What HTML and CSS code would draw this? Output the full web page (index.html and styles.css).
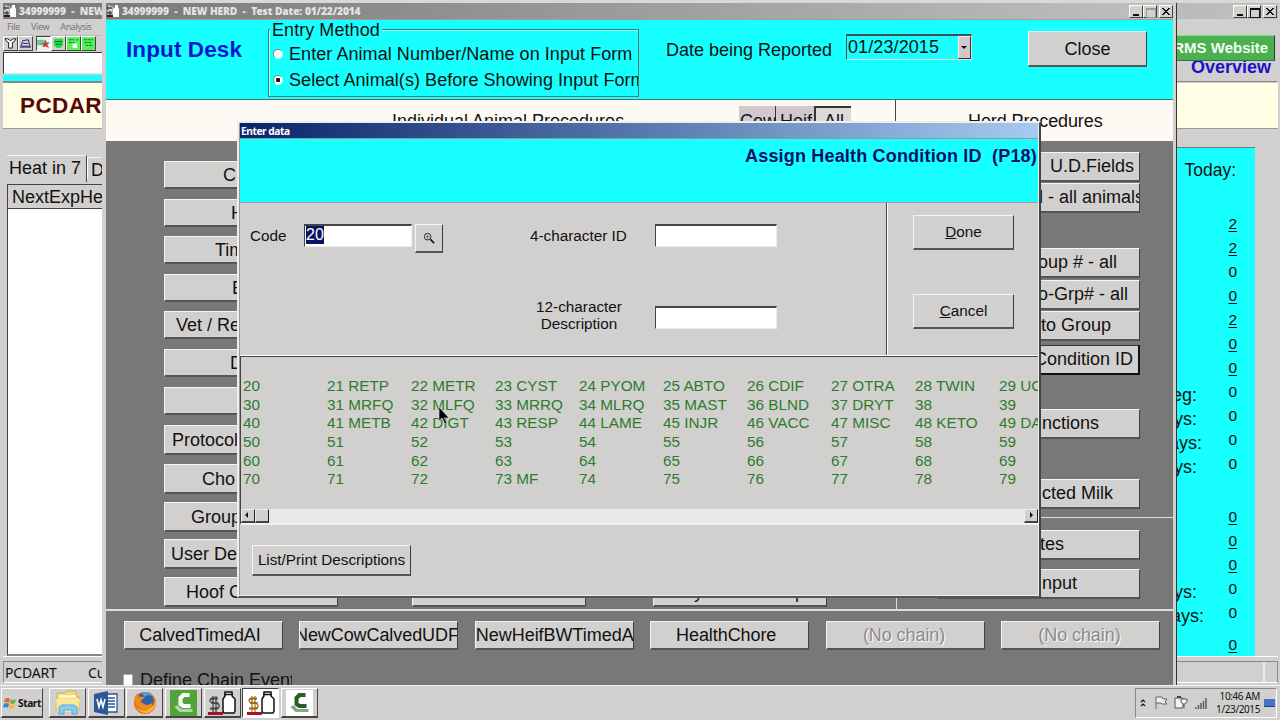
FILE: index.html
```html
<!DOCTYPE html>
<html lang="en">
<head>
<meta charset="utf-8">
<title>PCDART</title>
<link rel="stylesheet" href="styles.css">
</head>
<body>
<svg class="defs" width="0" height="0">
  <symbol id="herd" viewBox="0 0 12 12"><path d="M1 1h2v4h2V1M1 10V5h4v5" fill="none" stroke="#eee" stroke-width="1"/><path d="M0 3h5M0 8h5" stroke="#222"/><path d="M0 10h6v2H0z" fill="#411"/><path d="M8 0h3v2l1 2v8H6V4l2-2z" fill="#fff"/></symbol>
  <symbol id="milk" viewBox="0 0 28 24"><path d="M17 1h7v4l3 3v12l-1 2H16l-1-2V8l2-3z" fill="#fff" stroke="#111" stroke-width="1.5"/><path d="M16 3.500h9" stroke="#111" stroke-width="1.500"/><path d="M10 7H4L2 9v1l2 2h5l2 2v2l-2 2H2M5 5v16M8 5v16" fill="none" stroke="currentColor" stroke-width="1.5"/><path d="M2 8h8M3 12h8M2 17h9" stroke="#222" stroke-width=".7"/><path d="M0 21h15v3H0z" fill="#a41424"/></symbol>
  <symbol id="cam" viewBox="0 0 26 26"><path d="M19 3h-7L8 7v8l4 3h8v-4h-6l-2-1V9l2-2h5z" fill="currentColor"/><path d="M4 17l5 5h13v-3H11l-4-4z" fill="currentColor" opacity=".55"/></symbol>
</svg>

<main class="desktop">
  <section class="win main">
    <header class="title dim"><svg><use href="#herd"/></svg><b>34999999 &nbsp;- &nbsp;NEW HERD</b>
      <span class="ctl"><i class="min"></i><i class="max"></i><i class="x"></i></span></header>
    <nav class="menu"><span>File</span><span>View</span><span>Analysis</span></nav>
    <div class="tools">
      <span><svg viewBox="0 0 14 13"><path d="M1 2h3l3 2 3-2h3l-2 3-2 1v6H5V6L3 5z" fill="#fff" stroke="#111"/></svg></span>
      <span><svg viewBox="0 0 14 13"><path d="M2 10l2-6 6-1 2 7zM4 7h6M1 11h12" fill="none" stroke="#226"/></svg></span>
      <span class="on"><svg viewBox="0 0 14 13"><path d="M0 3h8l3 3-3 3H0z" fill="#6c9"/><path d="M9 3l1 3h4l-3 2 2 4-4-2-3 1 1-3-4-1h5z" fill="#c33"/></svg></span>
      <span><svg viewBox="0 0 14 13"><path d="M2 2h10v7l-3 3H5L2 9z" fill="#2d4"/><path d="M3 5h8M4 8h6" stroke="#063"/></svg></span>
      <span class="lime"><svg viewBox="0 0 14 13"><path d="M2 3h3M6 3h2M10 3h2M2 6h3M6 6h2" stroke="#063"/><path d="M6 7h5v5H6z" fill="#efe"/></svg></span>
      <span class="lime"><svg viewBox="0 0 14 13"><path d="M2 3h10M3 6h8M4 9h7" stroke="#063" stroke-dasharray="3 1"/></svg></span>
    </div>
    <div class="address"></div>
    <button class="website">DRMS Website</button>
    <div class="overview"></div>
    <div class="banner">PCDART</div>
    <div class="body">
      <div class="left">
        <div class="tabs"><span>Heat in 7</span><span>D</span></div>
        <div class="list"><div class="head">NextExpHeat</div></div>
      </div>
      <aside class="today">
        <span class="cap">Today:</span>
        <u class="first">2</u><u>2</u><b>0</b><u>0</u><u>2</u><u>0</u><u>0</u>
        <b><i>Preg:</i>0</b><b><i>Days:</i>0</b><b><i class="far">Days:</i>0</b><b><i>Days:</i>0</b>
        <u class="gap">0</u><u>0</u><u>0</u><b><i>Days:</i>0</b><b><i class="far2">Days:</i>0</b><u class="total">0</u>
      </aside>
    </div>
    <footer class="status"><span>PCDART</span><span>Cu</span><em></em></footer>
  </section>
  <span class="overlabel">Overview</span>

  <section class="win desk">
    <header class="title dim"><svg><use href="#herd"/></svg><b>34999999 &nbsp;- &nbsp;NEW HERD &nbsp;- &nbsp;Test Date: 01/22/2014</b>
      <span class="ctl"><i class="min"></i><i class="max off"></i><i class="x"></i></span></header>
    <div class="top">
      <h1>Input Desk</h1>
      <div class="method"><span class="legend">Entry Method</span>
        <label><i class="radio"></i>Enter Animal Number/Name on Input Form</label>
        <label><i class="radio sel"></i>Select Animal(s) Before Showing Input Form</label></div>
      <span class="date">Date being Reported</span>
      <div class="combo">01/23/2015<i></i></div>
      <button class="btn close">Close</button>
    </div>
    <div class="procs">
      <span class="ind">Individual Animal Procedures</span>
      <span class="t1">Cow</span><span class="t2">Heif</span><span class="t3">All</span>
      <span class="herd">Herd Procedures</span>
    </div>
    <div class="area">
      <div class="col a">
        <button class="btn" style="padding-left:58px">C</button><button class="btn" style="padding-left:66px">H</button>
        <button class="btn" style="padding-left:50px">Tim</button><button class="btn" style="padding-left:67px">B</button>
        <button class="btn" style="padding-left:11px">Vet / Re</button><button class="btn" style="padding-left:65px">D</button>
        <button class="btn"></button><button class="btn" style="padding-left:7px">Protocol</button>
        <button class="btn" style="padding-left:37px">Cho</button><button class="btn" style="padding-left:26px">Group</button>
        <button class="btn" style="padding-left:6px">User De</button><button class="btn" style="padding-left:21px">Hoof C</button>
      </div>
      <div class="col mid"><button class="btn"></button></div>
      <div class="col mid m2"><button class="btn"><span>y</span><span>p</span></button></div>
      <div class="col b">
        <button class="btn" style="padding-right:5px">U.D.Fields</button><button class="btn long">l - all animals</button>
        <button class="btn" style="padding-right:22px">Group # - all</button><button class="btn" style="padding-right:11px">o-Grp# - all</button>
        <button class="btn" style="padding-right:28px">to Group</button><button class="btn focus" style="padding-right:5px">Condition ID</button>
        <button class="btn" style="padding-right:40px">Functions</button><button class="btn" style="padding-right:26px">cted Milk</button>
        <button class="btn" style="padding-right:75px">tes</button><button class="btn" style="padding-right:62px">Input</button>
      </div>
    </div>
    <div class="chains">
      <button class="btn c7"><span>CalvedTimedAI</span></button><button class="btn c4"><span>NewCowCalvedUDF</span></button>
      <button class="btn lead"><span>NewHeifBWTimedAI</span></button><button class="btn c7"><span>HealthChore</span></button>
      <button class="btn no"><span>(No chain)</span></button><button class="btn no"><span>(No chain)</span></button>
    </div>
    <label class="define"><i></i><span>Define Chain Events</span></label>
  </section>

  <section class="dialog">
    <header>Enter data</header>
    <h2>Assign Health Condition ID&nbsp; (P18)</h2>
    <div class="form">
      <div class="fields">
        <label class="f1">Code</label><div class="in i1"><span>20</span></div>
        <button class="btn look"><svg viewBox="0 0 14 14"><circle cx="5" cy="5" r="3.6" fill="none" stroke="#222"/><path d="M3 5h4M5 3v4" stroke="#555" stroke-width=".8"/><path d="M8 8l4 4" stroke="#111" stroke-width="1.7"/></svg></button>
        <label class="f2">4-character ID</label><div class="in i2"></div>
        <label class="f3">12-character<br>Description</label><div class="in i3"></div>
      </div>
      <div class="acts"><button class="btn"><span><u>D</u>one</span></button><button class="btn"><span><u>C</u>ancel</span></button></div>
    </div>
    <div class="codes">
      <div class="grid">
        <span>20</span><span>21 RETP</span><span>22 METR</span><span>23 CYST</span><span>24 PYOM</span><span>25 ABTO</span><span>26 CDIF</span><span>27 OTRA</span><span>28 TWIN</span><span>29 UCAL</span>
        <span>30</span><span>31 MRFQ</span><span>32 MLFQ</span><span>33 MRRQ</span><span>34 MLRQ</span><span>35 MAST</span><span>36 BLND</span><span>37 DRYT</span><span>38</span><span>39</span>
        <span>40</span><span>41 METB</span><span>42 DIGT</span><span>43 RESP</span><span>44 LAME</span><span>45 INJR</span><span>46 VACC</span><span>47 MISC</span><span>48 KETO</span><span>49 DA</span>
        <span>50</span><span>51</span><span>52</span><span>53</span><span>54</span><span>55</span><span>56</span><span>57</span><span>58</span><span>59</span>
        <span>60</span><span>61</span><span>62</span><span>63</span><span>64</span><span>65</span><span>66</span><span>67</span><span>68</span><span>69</span>
        <span>70</span><span>71</span><span>72</span><span>73 MF</span><span>74</span><span>75</span><span>76</span><span>77</span><span>78</span><span>79</span>
      </div>
      <div class="scroll"><i class="l"></i><i></i><i class="r"></i></div>
    </div>
    <button class="btn print">List/Print Descriptions</button>
  </section>

  <footer class="taskbar">
    <button class="start"><svg viewBox="0 0 14 14"><path d="M2 3q3-2 5 0L6 7Q4 5 1 7z" fill="#e8642a"/><path d="M8 3q2 2 5 0l-1 4q-3 2-5 0z" fill="#6ab43c"/><path d="M1 8q3-2 5 0l-1 4q-2-2-5 0z" fill="#3c82d8"/><path d="M7 8q2 2 5 0l-1 4q-3 2-5 0z" fill="#f4c02c"/></svg>Start</button>
    <div class="apps">
      <span><svg width="28" height="26" viewBox="0 0 28 26"><path d="M3 3h8l2-2h9v5l3 1v14H2z" fill="#f2dc80" stroke="#d0b04c"/><path d="M5 5h17v3H5z" fill="#fff3b8"/><path d="M2 9h24l-2 13H3z" fill="#f8e89a"/><path d="M5 24v-7l3-2h12l3 2v7h-5v-4h-8v4z" fill="#84cdf0" stroke="#5aa8d8"/></svg></span>
      <span><svg width="26" height="24" viewBox="0 0 26 24"><path d="M13 3h11v18H13z" fill="#fff" stroke="#2b5797" stroke-width="1.3"/><path d="M14 7h8M14 10h8M14 13h8M14 16h8" stroke="#2b5797" stroke-width="1.4"/><path d="M1 3l14-3v24L1 21z" fill="#2b5797"/><path d="M4 8l2 8 2-7 2 7 2-8" fill="none" stroke="#fff" stroke-width="1.6"/></svg></span>
      <span><svg width="26" height="24" viewBox="0 0 26 24"><circle cx="13" cy="12" r="11" fill="#e66a1c"/><circle cx="13" cy="10" r="8.5" fill="#2c62a8"/><path d="M10 2q7-3 11 3-6-2-9 1z" fill="#5a9cd8"/><path d="M2 10q0-5 4-8 0 3 2 4 3-1 5 1-4 1-4 4l5 3q4 0 6-2 1 6-6 7-8 0-12-9z" fill="#f08a1e"/><path d="M24 8q1 10-8 14-8 1-12-6 7 6 13 2 6-3 7-10z" fill="#f6b828"/></svg></span>
      <span><svg class="c1" width="27" height="26"><use href="#cam"/></svg></span>
      <span><svg class="m1" width="28" height="24"><use href="#milk"/></svg></span>
      <span class="active"><svg class="m2i" width="28" height="24"><use href="#milk"/></svg></span>
      <span><svg class="c2" width="27" height="26"><use href="#cam"/></svg></span>
    </div>
    <div class="tray">
      <svg width="70" height="18" viewBox="0 0 70 18"><path d="M2 8l2-2 2 2M2 12l2-2 2 2" fill="none" stroke="#111" stroke-width="1.2"/><path d="M17 15V3h6l1 2h4l-2 3 2 2h-5l-1-1h-5" fill="#eee" stroke="#666"/><path d="M36 4h8v10h-8z" fill="#f2f2f2" stroke="#555"/><path d="M38 3h4" stroke="#444" stroke-width="2"/><path d="M42 5h6v3l-2 2h-2l-2-2zM45 10v4" fill="#f2f2f2" stroke="#555"/><path d="M57 15v-2M59.500 15v-4M62 15v-6M64.500 15V7M67 15V4" stroke="#555" stroke-width="1.400"/></svg>
      <span>10:46 AM<br>1/23/2015</span><i></i>
    </div>
  </footer>
  <svg class="cursor" width="13" height="20" viewBox="0 0 13 20"><path d="M1 1v14l3-3 3 6 2-1-3-5h5z" fill="#000" stroke="#ddd" stroke-width=".6"/></svg>
</main>
</body>
</html>
```
FILE: styles.css
```css
* { box-sizing: border-box; }
body { margin: 0; overflow: hidden; font-family: "Liberation Sans", Arial, sans-serif; color: #111; }
.defs { position: absolute; }
.desktop { position: relative; width: 1280px; height: 720px; overflow: hidden; background: #d2d0ce; font-size: 18px; }
button { font: inherit; color: inherit; padding: 0; margin: 0; border: 0; border-radius: 0; }
i, em { font-style: normal; }

.btn { display: flex; align-items: center; background: #d2d0ce; border: 1px solid #f4f4f4; border-right-color: #404040; border-bottom: 2px solid #555; white-space: nowrap; overflow: hidden; line-height: 22px; }

/* windows */
.win { position: absolute; overflow: hidden; display: flex; flex-direction: column; }
.title { display: flex; align-items: center; flex: none; height: 16px; font: bold 10.2px/15px "Noto Sans", sans-serif; white-space: nowrap; color: #e4e4e4; word-spacing: .2px; }
.title.dim { background: linear-gradient(90deg, #7a7a7a, #c0c0c0); }
.title > svg { width: 12px; height: 12px; margin: 0 3px 0 1px; flex: none; }
.title b { letter-spacing: -.12px; }
.ctl { display: flex; margin-left: auto; }
.ctl i { position: relative; width: 14px; height: 13px; background: #d4d0cc; border: 1px solid #fff; border-right-color: #404040; border-bottom-color: #404040; }
.ctl .x { margin-left: 2px; }
.ctl .min::after { content: ""; position: absolute; left: 3px; bottom: 1px; width: 6px; height: 2px; background: #111; }
.ctl .max::after { content: ""; position: absolute; left: 2px; top: 2px; width: 8px; height: 7px; border: 1px solid #111; border-top-width: 2px; }
.ctl .off::after { border-color: #999; }
.ctl .x::after { content: ""; position: absolute; inset: 2px; background: linear-gradient(45deg, transparent 42%, #111 42% 58%, transparent 58%), linear-gradient(-45deg, transparent 42%, #111 42% 58%, transparent 58%); }

.main { left: 0; top: 0; width: 1280px; height: 685px; background: #d2d0ce; border-top: 3px solid #d8d8d8; padding: 0 2px 0 3px; }
.main .title { padding-right: 1px; }
.menu { display: flex; gap: 11px; height: 16px; padding: 0 0 0 4px; font: 9.200px/15px "Noto Sans", sans-serif; letter-spacing: -.45px; color: #777; }
.tools { display: flex; height: 16px; width: 100px; overflow: hidden; border-top: 1px solid #bbb; }
.tools span { flex: none; width: 15px; height: 15px; border: 1px solid #fff; border-right-color: #444; border-bottom-color: #444; display: flex; }
.tools span:nth-child(3) { margin-left: 3px; background: #eee; border-color: #444 #fff #fff #444; }
.tools .lime { background: #5af05a; }
.tools svg { width: 13px; height: 12px; }
.address { height: 22px; margin-top: 1px; width: 101px; background: #fff; border: 1px solid #333; border-bottom-color: #ddd; }
.website { position: absolute; left: 1148px; top: 32px; width: 127px; height: 26px; background: #4caf50; border: 1px solid #8d8; border-right-color: #333; border-bottom-color: #275; color: #f0fff0; font: bold 15px/24px "Liberation Sans"; text-align: right; padding-right: 6px; }
.overview { height: 9px; background: linear-gradient(#d2d0ce 1px, #18ffff 1px 7px, #888 7px); width: 1060px; flex: none; }
.overlabel { position: absolute; left: 1177px; top: 61px; height: 21px; width: 100px; padding-left: 14px; overflow: hidden; color: #2010c8; font: bold 18px/12px "Liberation Sans"; border-bottom: 1px solid #888; }
.banner { flex: none; height: 46px; background: #ffffe6; border-bottom: 1px solid #999; font: bold 22.5px/45px "Liberation Sans"; letter-spacing: .4px; color: #580808; padding-left: 17px; }
.body { display: flex; justify-content: space-between; height: 528px; border-bottom: 1px solid #fff; }
.left { width: 110px; padding: 26px 0 0 4px; }
.tabs { display: flex; height: 27px; line-height: 24px; }
.tabs span { border-top: 1px solid #f2f2f2; }
.tabs span:first-child { padding: 0 5px 0 2px; border-right: 1px solid #444; }
.tabs span:last-child { padding-left: 3px; margin-top: 2px; height: 22px; border-left: 1px solid #fff; }
.list { height: 472px; margin-top: 2px; border: 1px solid #444; background: #fff; border-bottom: 2px solid #888; }
.head { height: 24px; line-height: 24px; background: #d2d0ce; border-bottom: 1px solid #444; padding-left: 4px; }
.today { display: flex; flex-direction: column; align-items: flex-end; margin: 18px 23px 0 0; width: 110px; height: 509px; background: #18ffff; border-top: 1px solid #777; padding-right: 18px; font-size: 15.500px; }
.today .cap { font-size: 17.500px; line-height: 20px; margin: 12px 1px 0 0; }
.today u, .today b { flex: none; height: 24px; line-height: 24px; font-weight: normal; position: relative; text-underline-offset: 2px; }
.today .first { margin-top: 32px; }
.today .gap { margin-top: 29px; }
.today .total { margin-top: 8px; }
.today i { position: absolute; right: 40px; top: 3px; font-size: 18px; }
.today i.far { right: 35px; }
.today i.far2 { right: 33px; }
.status { display: flex; margin-top: 4px; height: 22px; border: 1px solid #888; border-bottom-color: #fff; font: 14px/21px "Noto Sans", sans-serif; letter-spacing: -.2px; padding-left: 1px; }
.status span:first-child { width: 83px; }
.status em { margin-left: auto; width: 14px; border-left: 2px solid #eee; }

.desk { left: 102px; top: 0; width: 1075px; height: 686px; background: #787878; border-top: 3px solid #d8d8d8; border-left: 4px solid #d2d0ce; border-right: 4px solid #d2d0ce; box-shadow: inset -1px 0 #777; }
.desk::after { content: ""; position: absolute; right: -4px; top: 0; width: 1px; height: 683px; background: #333; }
.desk { overflow: visible; }
.top { display: flex; align-items: flex-start; flex: none; height: 81px; background: #18ffff; border-bottom: 1px solid #377; border-top: 1px solid #a99; }
.top h1 { margin: 15px 0 0 20px; width: 142px; font-size: 22.500px; line-height: 30px; color: #0818d0; white-space: nowrap; letter-spacing: .1px; }
.method { position: relative; margin-top: 9px; width: 371px; height: 68px; border: 1px solid #487878; box-shadow: inset 1px 1px #9ff; padding: 11px 0 0 4px; overflow: visible; letter-spacing: .06px; }
.legend { position: absolute; left: 1px; top: -10px; padding: 0 2px; background: #18ffff; line-height: 20px; }
.method label { display: flex; align-items: center; height: 26px; line-height: 24px; white-space: nowrap; overflow: hidden; }
.radio { flex: none; width: 10px; height: 10px; margin-right: 6px; border-radius: 50%; background: #fff; border: 1px solid #788; border-right-color: #dff; border-bottom-color: #dff; }
.radio.sel { background: radial-gradient(circle, #111 0 2px, #fff 2.500px); }
.date { margin: 19px 0 0 27px; width: 180px; line-height: 22px; }
.combo { display: flex; justify-content: space-between; margin-top: 14px; width: 126px; height: 26px; line-height: 22px; letter-spacing: .1px; border: 1px solid #355; border-top-width: 2px; border-right-color: #ddd; border-bottom-color: #ddd; padding-left: 1px; }
.combo i { width: 13px; background: #d2c8cc; border: 1px solid #eee; border-right-color: #333; border-bottom-color: #333; position: relative; }
.combo i::after { content: ""; position: absolute; left: 2px; top: 9px; border: 3.500px solid transparent; border-top-color: #111; }
.close { justify-content: center; margin: 11px 0 0 56px; width: 119px; height: 36px; }
.procs { display: flex; flex: none; height: 41px; background: #fff9f4; padding-top: 6px; white-space: nowrap; }
.procs span { height: 35px; line-height: 30px; }
.procs .ind { padding-left: 286px; width: 633px; }
.procs .t1, .procs .t2, .procs .t3 { background: #d2c8cc; border-right: 1px solid #333; }
.procs .t1 { width: 37px; padding-left: 1px; } .procs .t2 { width: 38px; padding-left: 4px; border-right: 0; }
.procs .t3 { width: 37px; padding-left: 8px; border-top: 2px solid #333; border-left: 2px solid #333; border-right: 0; line-height: 27px; background: #dedad8; }
.procs .herd { margin: -6px 0 0 44px; height: 41px; line-height: 42px; padding-left: 72px; border-left: 1px solid #444; letter-spacing: -.1px; }
.area { display: flex; flex: none; height: 470px; background: linear-gradient(#ddd, #ddd) 790px 0 / 1px 470px no-repeat, linear-gradient(#ddd, #ddd) 790px 376px / 280px 1px no-repeat; border-bottom: 2px solid #ddd; }
.col { display: grid; align-content: start; align-items: start; flex: none; width: 174px; margin-left: 58px; }
.a { grid-template-rows: 38px 37px 38px 37px 38px 38px 38px 39px 38px 37px 38px 30px; padding-top: 20px; }
.a .btn { height: 28px; }
.a .btn:nth-child(n+8) { height: 30px; }
.mid { margin-left: 74px; padding-top: 436px; grid-template-rows: 30px; }
.mid .btn { height: 30px; }
.m2 { margin-left: 67px; }
.m2 .btn { padding-left: 40px; gap: 92px; }
.b { margin-left: 110px; width: 203px; grid-template-rows: 31px 65px 32px 31px 34px 64px 70px 51px 39px 30px; padding-top: 11px; }
.b .btn { height: 30px; width: 203px; justify-content: flex-end; padding-bottom: 1px; }
.b .long { justify-content: flex-start; padding-left: 101px; }
.b .focus { border-right: 2px solid #111; border-bottom-color: #111; border-top-color: #333; }
.chains { display: grid; grid-template-columns: repeat(6, 159px); column-gap: 16.400px; margin: 10px 0 0 18px; flex: none; }
.chains .btn { justify-content: center; height: 29px; letter-spacing: -.08px; }
.chains .c7 { padding-right: 7px; }
.chains .c4 { padding-right: 4px; }
.chains .lead { justify-content: flex-start; letter-spacing: -.03px; }
.chains .no { padding-right: 2px; color: #8a8a8a; text-shadow: 1px 1px #fff; }
.define { display: flex; width: 169px; height: 18px; margin: 19px 0 0 17px; overflow: hidden; line-height: 22px; white-space: nowrap; flex: none; }
.define i { flex: none; width: 10px; height: 12px; margin: 5px 7px 0 0; background: #fff; border: 1px solid #aaa; }

/* health condition dialog */
.dialog { position: absolute; left: 237px; top: 121px; width: 804px; height: 477px; background: #d2d0ce; border: 1px solid #ddd; border-top: 2px solid #eee; border-left: 2px solid #eee; border-right: 2px solid #444; border-bottom: 2px solid #555; font-size: 15.300px; display: flex; flex-direction: column; padding: 0 1px; overflow: hidden; box-shadow: inset -1px -1px #eee, inset 1px 0 #999; }
.dialog header { flex: none; height: 16px; background: linear-gradient(90deg, #0a246a, #a6caf0); color: #fff; font: bold 10.200px/16px "Noto Sans", sans-serif; letter-spacing: -.45px; padding-left: 1px; border-bottom: 1px solid #999; }
.dialog h2 { flex: none; margin: 0; height: 63px; padding: 6px 1px 0; background: #18ffff; font-size: 18px; letter-spacing: .18px; line-height: 22px; text-align: right; color: #08106c; }
.form { display: flex; flex: none; height: 154px; border-top: 1px solid #a99; border-bottom: 1px solid #fff; }
.fields { display: grid; grid-template-columns: 64px 108px 3px 105px 135px 122px; grid-template-rows: 82px 60px; width: 647px; padding-top: 21px; border-right: 1px solid #444; box-shadow: 1px 0 #fff; }
.fields label { line-height: 17px; padding-top: 3px; }
.f1 { padding-left: 10px; }
.in { height: 23px; background: #fff; border: 1px solid #444; border-top-width: 2px; border-right-color: #eee; border-bottom-color: #eee; }
.i1 span { display: inline-block; height: 18px; line-height: 18px; margin-left: 1px; background: #0a1464; color: #fff; font-size: 16px; }
.look { grid-column: 4; width: 28px; height: 29px; justify-content: center; }
.look svg { width: 13px; height: 13px; }
.f2 { grid-column: 5; padding-left: 10px; }
.i2 { grid-column: 6; }
.f3 { grid-column: 5; grid-row: 2; justify-self: start; width: 118px; text-align: center; margin-top: -11px; white-space: nowrap; }
.i3 { grid-column: 6; grid-row: 2; }
.acts { padding: 12px 0 0 26px; display: grid; grid-template-rows: 79px 34px; align-content: start; }
.acts .btn { width: 101px; height: 35px; justify-content: center; }
.codes { flex: none; height: 169px; border-top: 1px solid #444; border-left: 1px solid #444; border-bottom: 2px solid #f2f2f2; padding-top: 20px; overflow: hidden; }
.grid { display: grid; grid-template-columns: repeat(10, 84px); grid-auto-rows: 18.700px; line-height: 18.700px; height: 132px; padding-left: 2px; color: #2c7c2c; white-space: nowrap; }
.scroll { display: flex; width: 797px; height: 14px; background: #e9e8e7; }
.scroll i { width: 14px; background: #d2d0ce; border: 1px solid #eee; border-right-color: #222; border-bottom: 2px solid #444; position: relative; }
.scroll .l::after { content: ""; position: absolute; left: 0; top: 2px; border: 3.500px solid transparent; border-right-color: #111; }
.scroll .r { margin-left: auto; }
.scroll .r::after { content: ""; position: absolute; left: 5px; top: 2px; border: 3.500px solid transparent; border-left-color: #111; }
.print { flex: none; width: 159px; height: 31px; margin: 20px 0 0 12px; justify-content: center; letter-spacing: -.03px; }

/* taskbar */
.taskbar { position: absolute; left: 0; top: 685px; width: 1280px; height: 35px; background: #d2d0ce; border-top: 1px solid #f2f2f2; display: flex; padding: 2px 3px 2px 1px; }
.start, .apps span { display: flex; align-items: center; justify-content: center; border: 1px solid #fff; border-right: 1px solid #444; border-bottom: 2px solid #444; background: #d2d0ce; }
.start { width: 42px; font: bold 10.200px "Noto Sans", sans-serif; gap: 1px; letter-spacing: -.4px; }
.start svg { width: 14px; height: 14px; }
.apps { display: flex; gap: 1.700px; margin-left: 6px; }
.apps span { width: 37px; }
.apps .active { background: #fff; border-color: #444 #fff #fff #444; }
.c1 { background: #52a43a; color: #fff; }
.c2 { background: #fff; color: #285c28; }
.m1 { color: #555; } .m2i { color: #c08a28; }
.tray { display: flex; align-items: center; margin-left: auto; width: 142px; border: 1px solid #888; border-right-color: #fff; border-bottom-color: #fff; font: 10px/13.500px "Noto Sans", sans-serif; text-align: center; letter-spacing: -.4px; }
.tray svg { flex: none; margin-left: 3px; width: 70px; }
.tray span { flex: none; width: 47px; margin-left: 4px; white-space: nowrap; text-align: right; }
.tray i { flex: none; width: 11px; height: 8px; margin-left: 4px; background: #4a70d0; border-bottom: 1px solid #2a408a; }
.cursor { position: absolute; left: 438px; top: 406px; }
```
